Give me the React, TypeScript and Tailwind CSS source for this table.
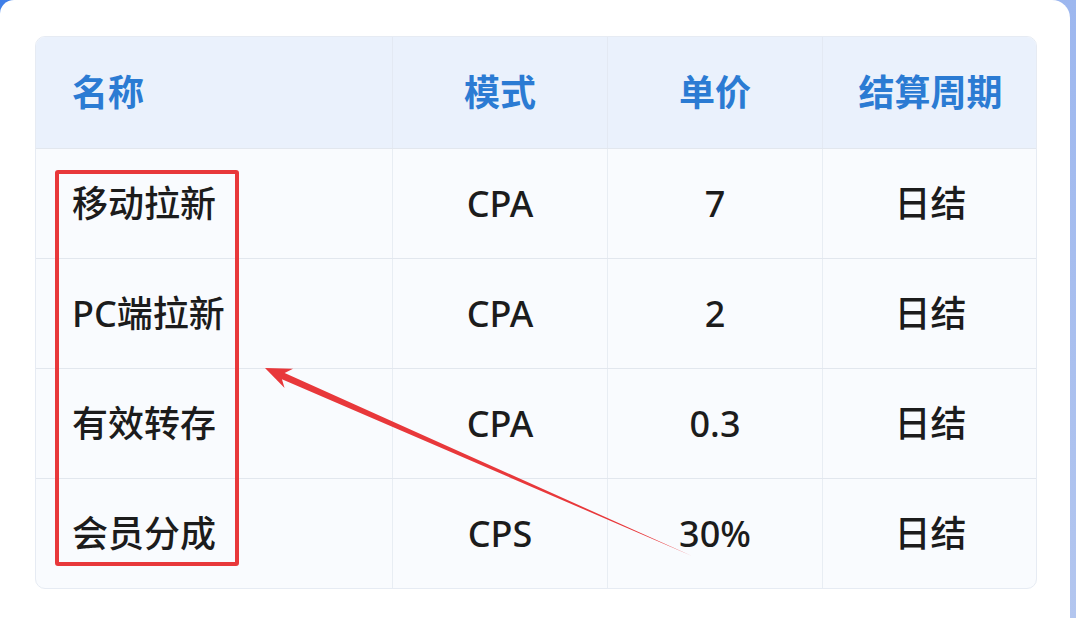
import React from "react";

const columns = ["名称", "模式", "单价", "结算周期"];

const rows = [
  ["移动拉新", "CPA", "7", "日结"],
  ["PC端拉新", "CPA", "2", "日结"],
  ["有效转存", "CPA", "0.3", "日结"],
  ["会员分成", "CPS", "30%", "日结"],
];

// tapered annotation arrow, tip at top-left
const Arrow = () => {
  const tip = [265, 368];
  const tail = [692, 556];
  const dx = tail[0] - tip[0];
  const dy = tail[1] - tip[1];
  const len = Math.hypot(dx, dy);
  const u = [dx / len, dy / len];
  const n = [-u[1], u[0]];
  const headLen = 26;
  const headHalf = 10.5;
  const shaft = 3.4;
  const base = [tip[0] + u[0] * headLen, tip[1] + u[1] * headLen];
  const neck = [tip[0] + u[0] * (headLen - 6), tip[1] + u[1] * (headLen - 6)];
  const pts = [
    tip,
    [base[0] + n[0] * headHalf, base[1] + n[1] * headHalf],
    [neck[0] + n[0] * shaft, neck[1] + n[1] * shaft],
    tail,
    [neck[0] - n[0] * shaft, neck[1] - n[1] * shaft],
    [base[0] - n[0] * headHalf, base[1] - n[1] * headHalf],
  ];
  return (
    <svg
      className="pointer-events-none absolute left-0 top-0"
      width={1076}
      height={618}
      viewBox="0 0 1076 618"
    >
      <polygon
        points={pts.map((p) => p.join(",")).join(" ")}
        fill="#e8383b"
      />
    </svg>
  );
};

const App = () => {
  return (
    <div
      className="relative h-[618px] w-[1076px] overflow-hidden bg-linear-to-br from-[#3f7fe8] via-[#9db7ef] to-[#b3c6ef]"
      style={{ fontFamily: '"Noto Sans", "Noto Sans CJK SC", sans-serif' }}
    >
      <div className="h-full w-[1070px] rounded-tl-[14px] rounded-tr-[18px] bg-white pl-[35px] pt-[36px]">
        <div className="w-[1002px] overflow-hidden rounded-[10px] border border-[#e6ebf3] bg-[#f9fbfe]">
          {/* 表头 */}
          <div className="grid h-[111px] grid-cols-[356px_215px_215px_216px] bg-[#eaf1fc]">
            {columns.map((col, i) => (
              <div
                key={col}
                className={`flex items-center text-[36px] font-bold text-[#2b7bd3] ${
                  i === 0 ? "pl-[36px]" : "justify-center border-l border-[#e3e9f3]"
                }`}
              >
                {col}
              </div>
            ))}
          </div>
          {rows.map((row) => (
            <div
              key={row[0]}
              className="grid h-[110px] grid-cols-[356px_215px_215px_216px] border-t border-[#e2e7ee]"
            >
              {row.map((cell, i) => (
                <div
                  key={i}
                  className={`flex items-center pt-[1px] text-[36px] font-medium text-[#1c1c1c] ${
                    i === 0 ? "pl-[36px]" : "justify-center border-l border-[#e8edf3]"
                  }`}
                >
                  {cell}
                </div>
              ))}
            </div>
          ))}
        </div>
      </div>

      {/* 标注框 */}
      <div className="absolute left-[55px] top-[170px] h-[396px] w-[184px] rounded-[3px] border-[4px] border-[#e8383b]" />
      <Arrow />
    </div>
  );
};

export default App;
